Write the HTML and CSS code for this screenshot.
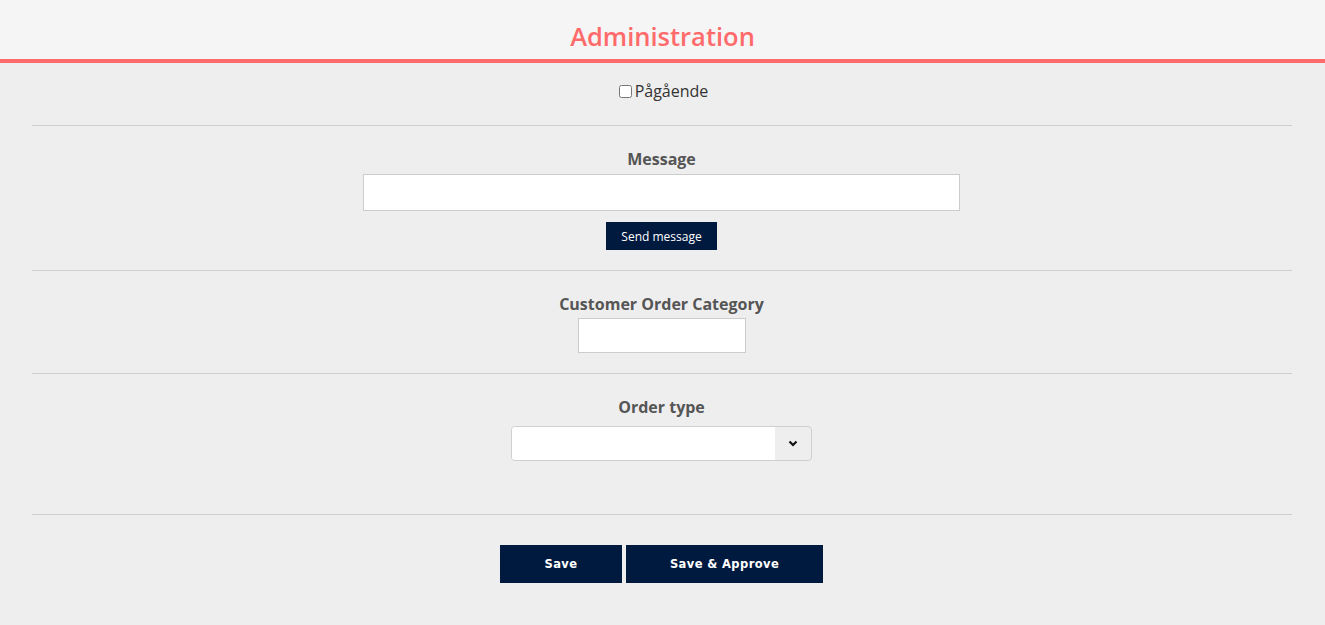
FILE: index.html
```html
<!DOCTYPE html>
<html>
<head>
<meta charset="utf-8">
<link rel="stylesheet" href="styles.css">
</head>
<body>
<header class="header"><h1 class="title">Administration</h1></header>
<main class="content">
  <section class="row row-check">
    <label class="check"><input type="checkbox" class="cb">Pågående</label>
  </section>
  <section class="row row-message">
    <div class="label">Message</div>
    <input type="text" class="input input-wide">
    <button class="btn-small">Send message</button>
  </section>
  <section class="row row-cat">
    <div class="label">Customer Order Category</div>
    <input type="text" class="input input-small">
  </section>
  <section class="row row-type">
    <div class="label">Order type</div>
    <div class="select">
      <div class="select-field"></div>
      <div class="select-arrow">
        <svg width="10" height="7" viewBox="0 0 10 7"><path d="M1.5 1.5 L5 5 L8.5 1.5" fill="none" stroke="#111" stroke-width="2.2"/></svg>
      </div>
    </div>
  </section>
  <section class="actions">
    <button class="btn-big btn-save">Save</button>
    <button class="btn-big btn-approve">Save &amp; Approve</button>
  </section>
</main>
</body>
</html>
```
FILE: styles.css
```css
* { box-sizing: border-box; }
html, body { margin: 0; padding: 0; }
body {
  background: #eeeeee;
  font-family: "Open Sans", "Liberation Sans", sans-serif;
  color: #333;
  width: 1325px;
  height: 625px;
  overflow: hidden;
}
.header {
  background: #f5f5f5;
  height: 63px;
  border-bottom: 4px solid #ff6b6b;
  display: flex;
  justify-content: center;
}
.title {
  margin: 0;
  padding-top: 18px;
  font-size: 25.5px;
  line-height: 36px;
  font-weight: 600;
  color: #ff6b6b;
}
.content {
  margin: 0 33px 0 32px;
}
.row {
  border-bottom: 1px solid #cfcfcf;
  display: flex;
  flex-direction: column;
  align-items: center;
  padding-right: 1px;
}
.row-check { height: 63px; padding-top: 17px; padding-left: 4px; }
.check {
  display: flex;
  align-items: center;
  font-size: 16px;
  line-height: 22px;
  color: #333;
}
.cb {
  margin: 0 3px 0 0;
  width: 13px;
  height: 13px;
}
.label {
  font-weight: 700;
  font-size: 16px;
  line-height: 22px;
  color: #555;
}
.row-message { height: 145px; padding-top: 22px; }
.input {
  background: #fff;
  border: 1px solid #cccccc;
  margin-top: 4px;
}
.input-wide { width: 597px; height: 37px; }
.input-small { width: 168px; height: 35px; margin-top: 3px; }
.btn-small {
  margin-top: 11px;
  width: 111px;
  height: 28px;
  background: #001a3f;
  color: #fff;
  border: none;
  font-family: "Open Sans", "Liberation Sans", sans-serif;
  font-size: 12px;
  padding: 0;
}
.row-cat { height: 103px; padding-top: 22px; }
.row-type { height: 141px; padding-top: 22px; }
.select {
  margin-top: 8px;
  width: 301px;
  height: 35px;
  border: 1px solid #d0d0d0;
  border-radius: 4px;
  display: flex;
  overflow: hidden;
  background: #eeeeee;
}
.select-field { flex: 1; background: #fff; }
.select-arrow {
  width: 36px;
  display: flex;
  align-items: center;
  justify-content: center;
}
.actions {
  display: flex;
  justify-content: center;
  gap: 4px;
  padding-top: 30px;
  padding-right: 1px;
}
.btn-big {
  height: 38px;
  background: #001a3f;
  color: #fff;
  border: none;
  font-family: "DejaVu Sans", Verdana, sans-serif;
  font-weight: 700;
  font-size: 11.5px;
  letter-spacing: 0.4px;
  padding: 0;
}
.btn-save { width: 122px; }
.btn-approve { width: 197px; }
```
